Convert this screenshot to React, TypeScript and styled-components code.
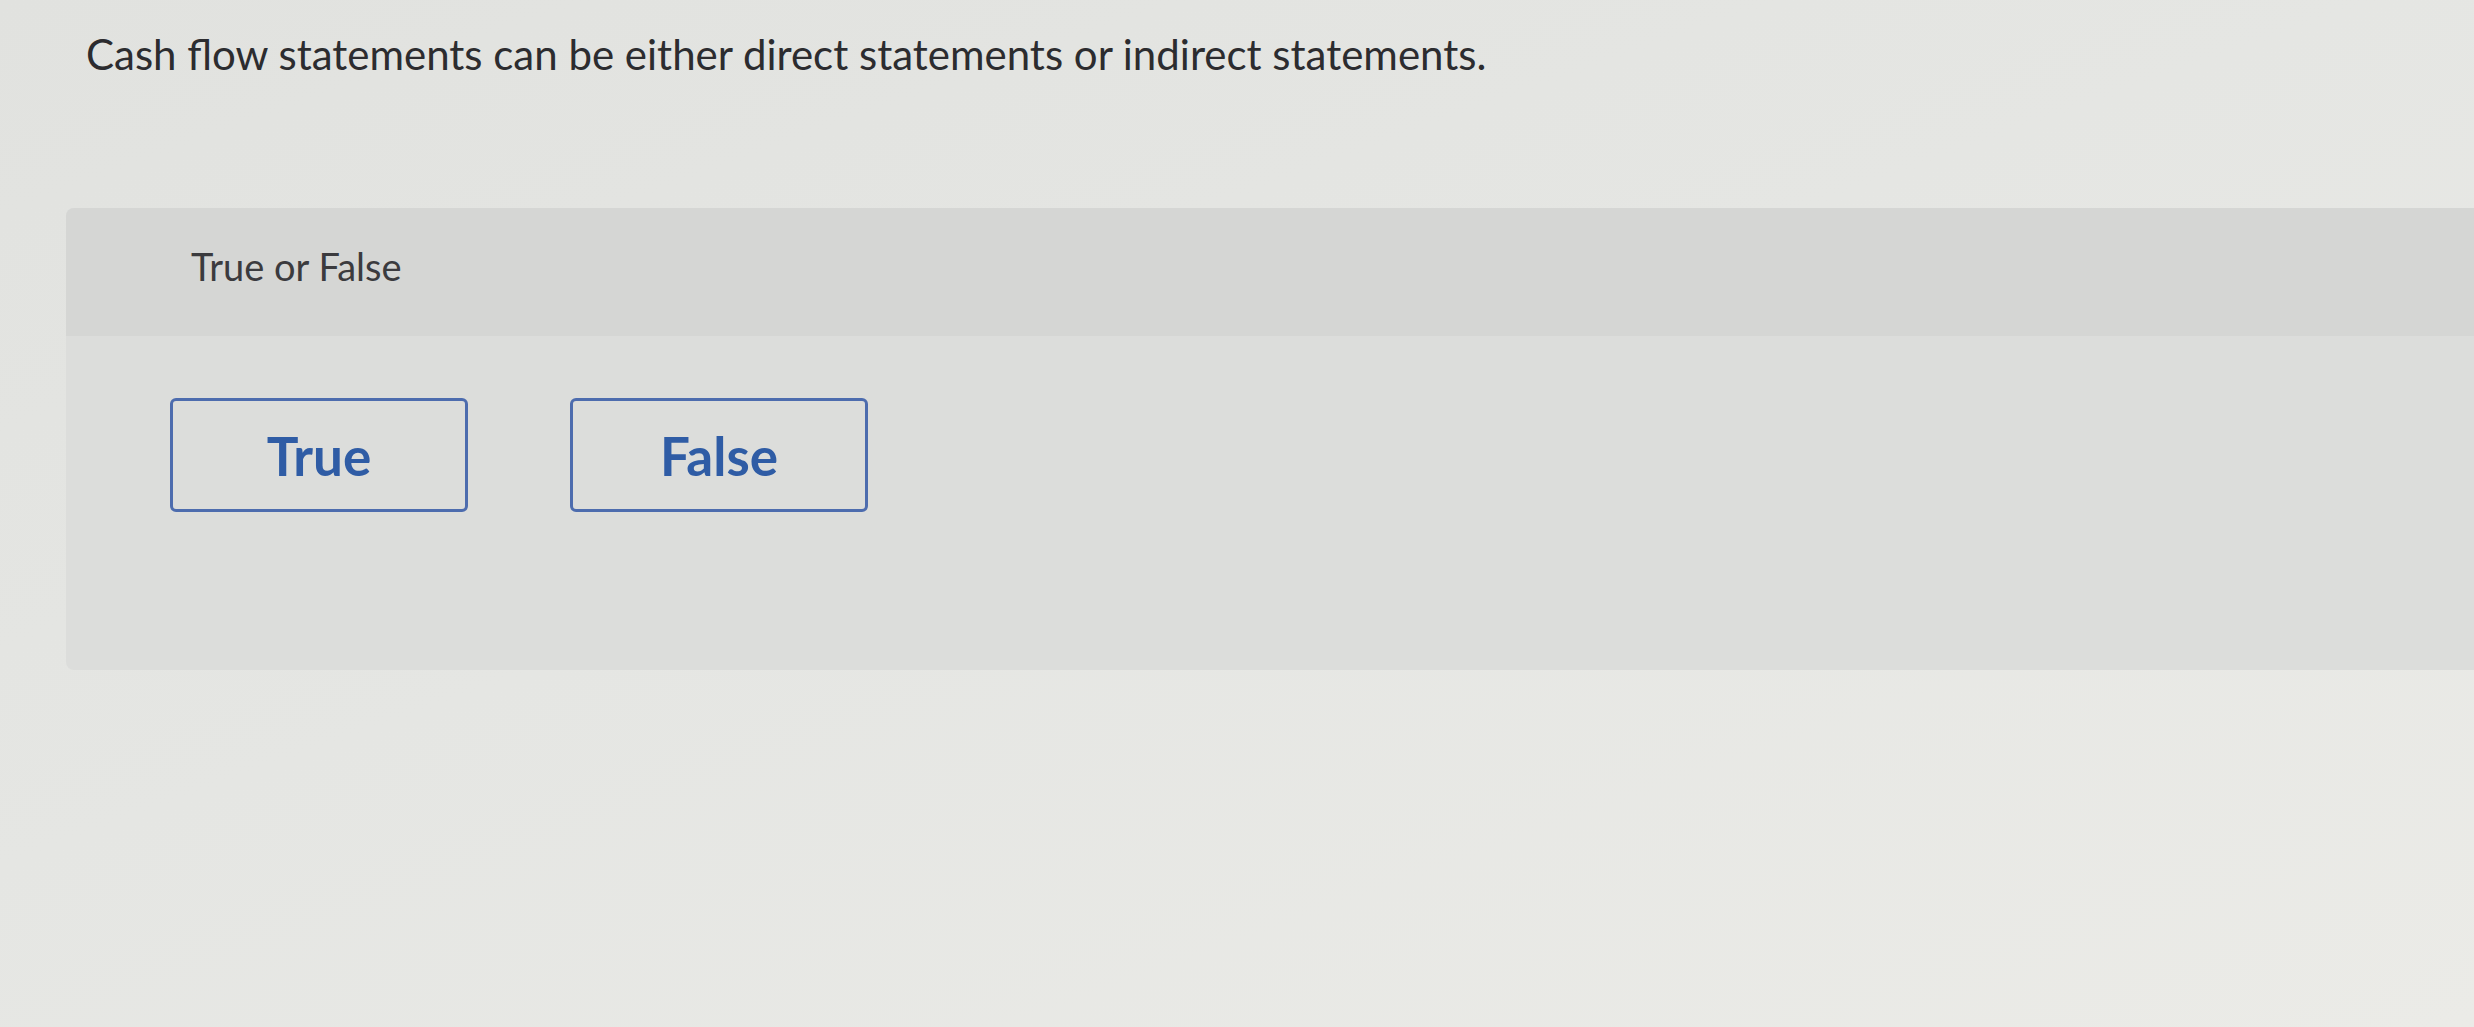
import styled, { createGlobalStyle } from 'styled-components'

const GlobalStyle = createGlobalStyle`
html, body {
    margin: 0;
    padding: 0;
}
body {
    font-family: Lato, "Open Sans", "Liberation Sans", sans-serif;
    background: #e4e5e2;
}
`

const App = () => {
    return (
        <Page>
            <GlobalStyle />
            <Question>Cash flow statements can be either direct statements or indirect statements.</Question>

            <Card>
                <CardHeader>
                    <Prompt>True or False</Prompt>
                </CardHeader>
                <Choices>
                    <Choice type="button">True</Choice>
                    <Choice type="button">False</Choice>
                </Choices>
            </Card>
        </Page>
    )
}

export default App

const Page = styled.div`
width: 100%;
min-height: 1027px;
box-sizing: border-box;
padding: 30px 0 0 66px;
overflow: hidden;
background: linear-gradient(160deg, #e1e2df 0%, #e5e6e3 45%, #ebebe7 100%);
`

const Question = styled.h1`
margin: 0 0 0 20px;
font-size: 42px;
line-height: 48px;
font-weight: 400;
color: #2c2c2f;
letter-spacing: 0;
`

const Card = styled.section`
margin-top: 130px;
margin-right: -20px;
background: #dcdddb;
border-radius: 8px 0 0 8px;
height: 462px;
`

const CardHeader = styled.div`
height: 128px;
box-sizing: border-box;
padding: 38px 0 0 125px;
background: #d5d6d4;
border-radius: 8px 0 0 0;
`

const Prompt = styled.div`
font-size: 38px;
line-height: 40px;
color: #3b3b3e;
`

const Choices = styled.div`
display: flex;
gap: 102px;
padding: 62px 0 0 104px;
`

const Choice = styled.button`
width: 298px;
height: 114px;
box-sizing: border-box;
background: transparent;
border: 3px solid #4d6cae;
border-radius: 6px;
font-family: Lato, "Open Sans", "Liberation Sans", sans-serif;
font-size: 53px;
font-weight: 700;
color: #2f5ca5;
cursor: pointer;
`
